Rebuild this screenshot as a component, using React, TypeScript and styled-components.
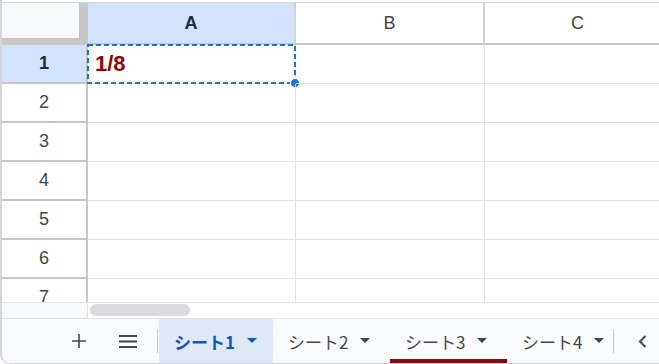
import styled, { createGlobalStyle, css } from "styled-components";

const GlobalStyle = createGlobalStyle`
  html, body {
    margin: 0;
    padding: 0;
    background: #ffffff;
    overflow: hidden;
  }
  * {
    box-sizing: border-box;
  }
`;

const Frame = styled.div`
  width: 659px;
  height: 364px;
  display: flex;
  flex-direction: column;
  padding-top: 2px;
  border-left: 2px solid #d3d5d8;
  border-bottom: 1px solid #d3d5d8;
  border-bottom-left-radius: 10px;
  overflow: hidden;
  font-family: "Liberation Sans", Arial, sans-serif;
  background: #ffffff;
`;

const Sheet = styled.div`
  height: 300px;
  flex: none;
  display: grid;
  grid-template-columns: 86px 208px 189px 187px;
  grid-template-rows: 42px;
  grid-auto-rows: 39px;
  border-top: 1px solid #d6d8da;
  overflow: hidden;
`;

const Corner = styled.div`
  background: #f8f9fa;
  border-right: 9px solid #c7c7c7;
  border-bottom: 7px solid #c7c7c7;
`;

const ColHeader = styled.div<{ $active?: boolean }>`
  display: flex;
  align-items: center;
  justify-content: center;
  font-size: 18px;
  color: #444746;
  background: #ffffff;
  border-right: 2px solid #d0d2d4;
  border-bottom: 2px solid #c7c7c7;
  ${({ $active }) =>
    $active &&
    css`
      background: #d3e3fd;
      color: #1f2a44;
      font-weight: 700;
    `}
`;

const RowHeader = styled.div<{ $active?: boolean }>`
  display: flex;
  align-items: center;
  justify-content: center;
  font-size: 18px;
  color: #444746;
  background: #ffffff;
  border-right: 2px solid #c7c7c7;
  border-bottom: 2px solid #c7c7c7;
  ${({ $active }) =>
    $active &&
    css`
      background: #d3e3fd;
      color: #1f2a44;
      font-weight: 700;
    `}
`;

const Cell = styled.div`
  position: relative;
  border-right: 1px solid #e1e1e1;
  border-bottom: 1px solid #e1e1e1;
  display: flex;
  align-items: center;
  padding-left: 7px;
  font-size: 22px;
`;

const CellValue = styled.span`
  color: #910606;
  font-weight: 700;
`;

const Marquee = styled.svg`
  position: absolute;
  left: -1px;
  top: -1px;
  width: 210px;
  height: 40px;
  overflow: visible;
  pointer-events: none;
`;

const ScrollRow = styled.div`
  height: 16px;
  flex: none;
  display: flex;
  border-top: 1px solid #e3e3e3;
`;

const ScrollCorner = styled.div`
  width: 86px;
  background: #f8f9fa;
  border-right: 1px solid #e0e0e0;
`;

const Thumb = styled.div`
  width: 100px;
  height: 12px;
  margin: 1px 0 0 2px;
  border-radius: 6px;
  background: #dadce0;
`;

const TabBar = styled.div`
  flex: 1;
  display: flex;
  align-items: stretch;
  background: #f9fbfd;
  border-top: 1px solid #e3e3e3;
  padding-left: 61px;
  font-family: "Noto Sans CJK JP", "Liberation Sans", sans-serif;
`;

const IconButton = styled.div`
  width: 32px;
  display: flex;
  align-items: center;
  justify-content: center;
  color: #444746;
  margin-right: 17px;
`;

const Divider = styled.div<{ $pull?: number }>`
  width: 1px;
  height: 24px;
  flex: none;
  align-self: center;
  background: #c4c7c5;
  margin: 0 1px 0 ${({ $pull = 4 }) => -$pull}px;
`;

const Tab = styled.div<{ $active?: boolean; $mark?: string }>`
  width: 117px;
  flex: none;
  display: flex;
  align-items: center;
  padding: 0 0 0 15px;
  gap: 12px;
  font-size: 17px;
  color: #444746;
  ${({ $active }) =>
    $active &&
    css`
      width: 114px;
      background: #e1e9f7;
      color: #0b57d0;
      font-weight: 700;
    `}
  ${({ $mark }) =>
    $mark &&
    css`
      box-shadow: inset 0 -4px 0 ${$mark};
    `}
`;

const TabLabel = styled.span`
  white-space: nowrap;
  line-height: 1;
`;

const Nav = styled.div`
  flex: 1;
  display: flex;
  align-items: center;
  justify-content: flex-end;
  padding-right: 12px;
  color: #444746;
`;

const Caret = () => (
  <svg width="10" height="6" viewBox="0 0 10 6">
    <path d="M0 0h10L5 5z" fill="currentColor" />
  </svg>
);

const rows = [1, 2, 3, 4, 5, 6, 7];
const sheets = [
  { name: "シート1", active: true },
  { name: "シート2" },
  { name: "シート3", mark: "#8b0a0a" },
  { name: "シート4" },
];

export default function App() {
  return (
    <>
      <GlobalStyle />
      <Frame>
        <Sheet>
          <Corner />
          <ColHeader $active>A</ColHeader>
          <ColHeader>B</ColHeader>
          <ColHeader>C</ColHeader>
          {rows.map((r) => (
            <Row key={r} index={r} />
          ))}
        </Sheet>
        <ScrollRow>
          <ScrollCorner />
          <Thumb />
        </ScrollRow>
        <TabBar>
          <IconButton>
            <svg width="14" height="14" viewBox="0 0 14 14">
              <path d="M7 0v14M0 7h14" stroke="currentColor" strokeWidth="1.6" />
            </svg>
          </IconButton>
          <IconButton>
            <svg width="18" height="13" viewBox="0 0 18 13">
              <path d="M0 1h18M0 6.5h18M0 12h18" stroke="currentColor" strokeWidth="2" />
            </svg>
          </IconButton>
          <Divider />
          {sheets.map((s) => (
            <Tab key={s.name} $active={s.active} $mark={s.mark}>
              <TabLabel>{s.name}</TabLabel>
              <Caret />
            </Tab>
          ))}
          <Divider $pull={11} />
          <Nav>
            <svg width="9" height="13" viewBox="0 0 9 13">
              <path d="M7.5 1L2 6.5 7.5 12" stroke="currentColor" strokeWidth="2" fill="none" />
            </svg>
          </Nav>
        </TabBar>
      </Frame>
    </>
  );
}

function Row({ index }: { index: number }) {
  const first = index === 1;
  return (
    <>
      <RowHeader $active={first}>{index}</RowHeader>
      <Cell>
        {first && (
          <>
            <CellValue>1/8</CellValue>
            <Marquee viewBox="0 0 210 40">
              <rect
                x="1"
                y="1"
                width="207"
                height="38"
                fill="none"
                stroke="#1a73e8"
                strokeWidth="2"
                strokeDasharray="5 3"
              />
              <circle cx="208" cy="39" r="4.5" fill="#1a73e8" stroke="#ffffff" strokeWidth="1" />
            </Marquee>
          </>
        )}
      </Cell>
      <Cell />
      <Cell />
    </>
  );
}
